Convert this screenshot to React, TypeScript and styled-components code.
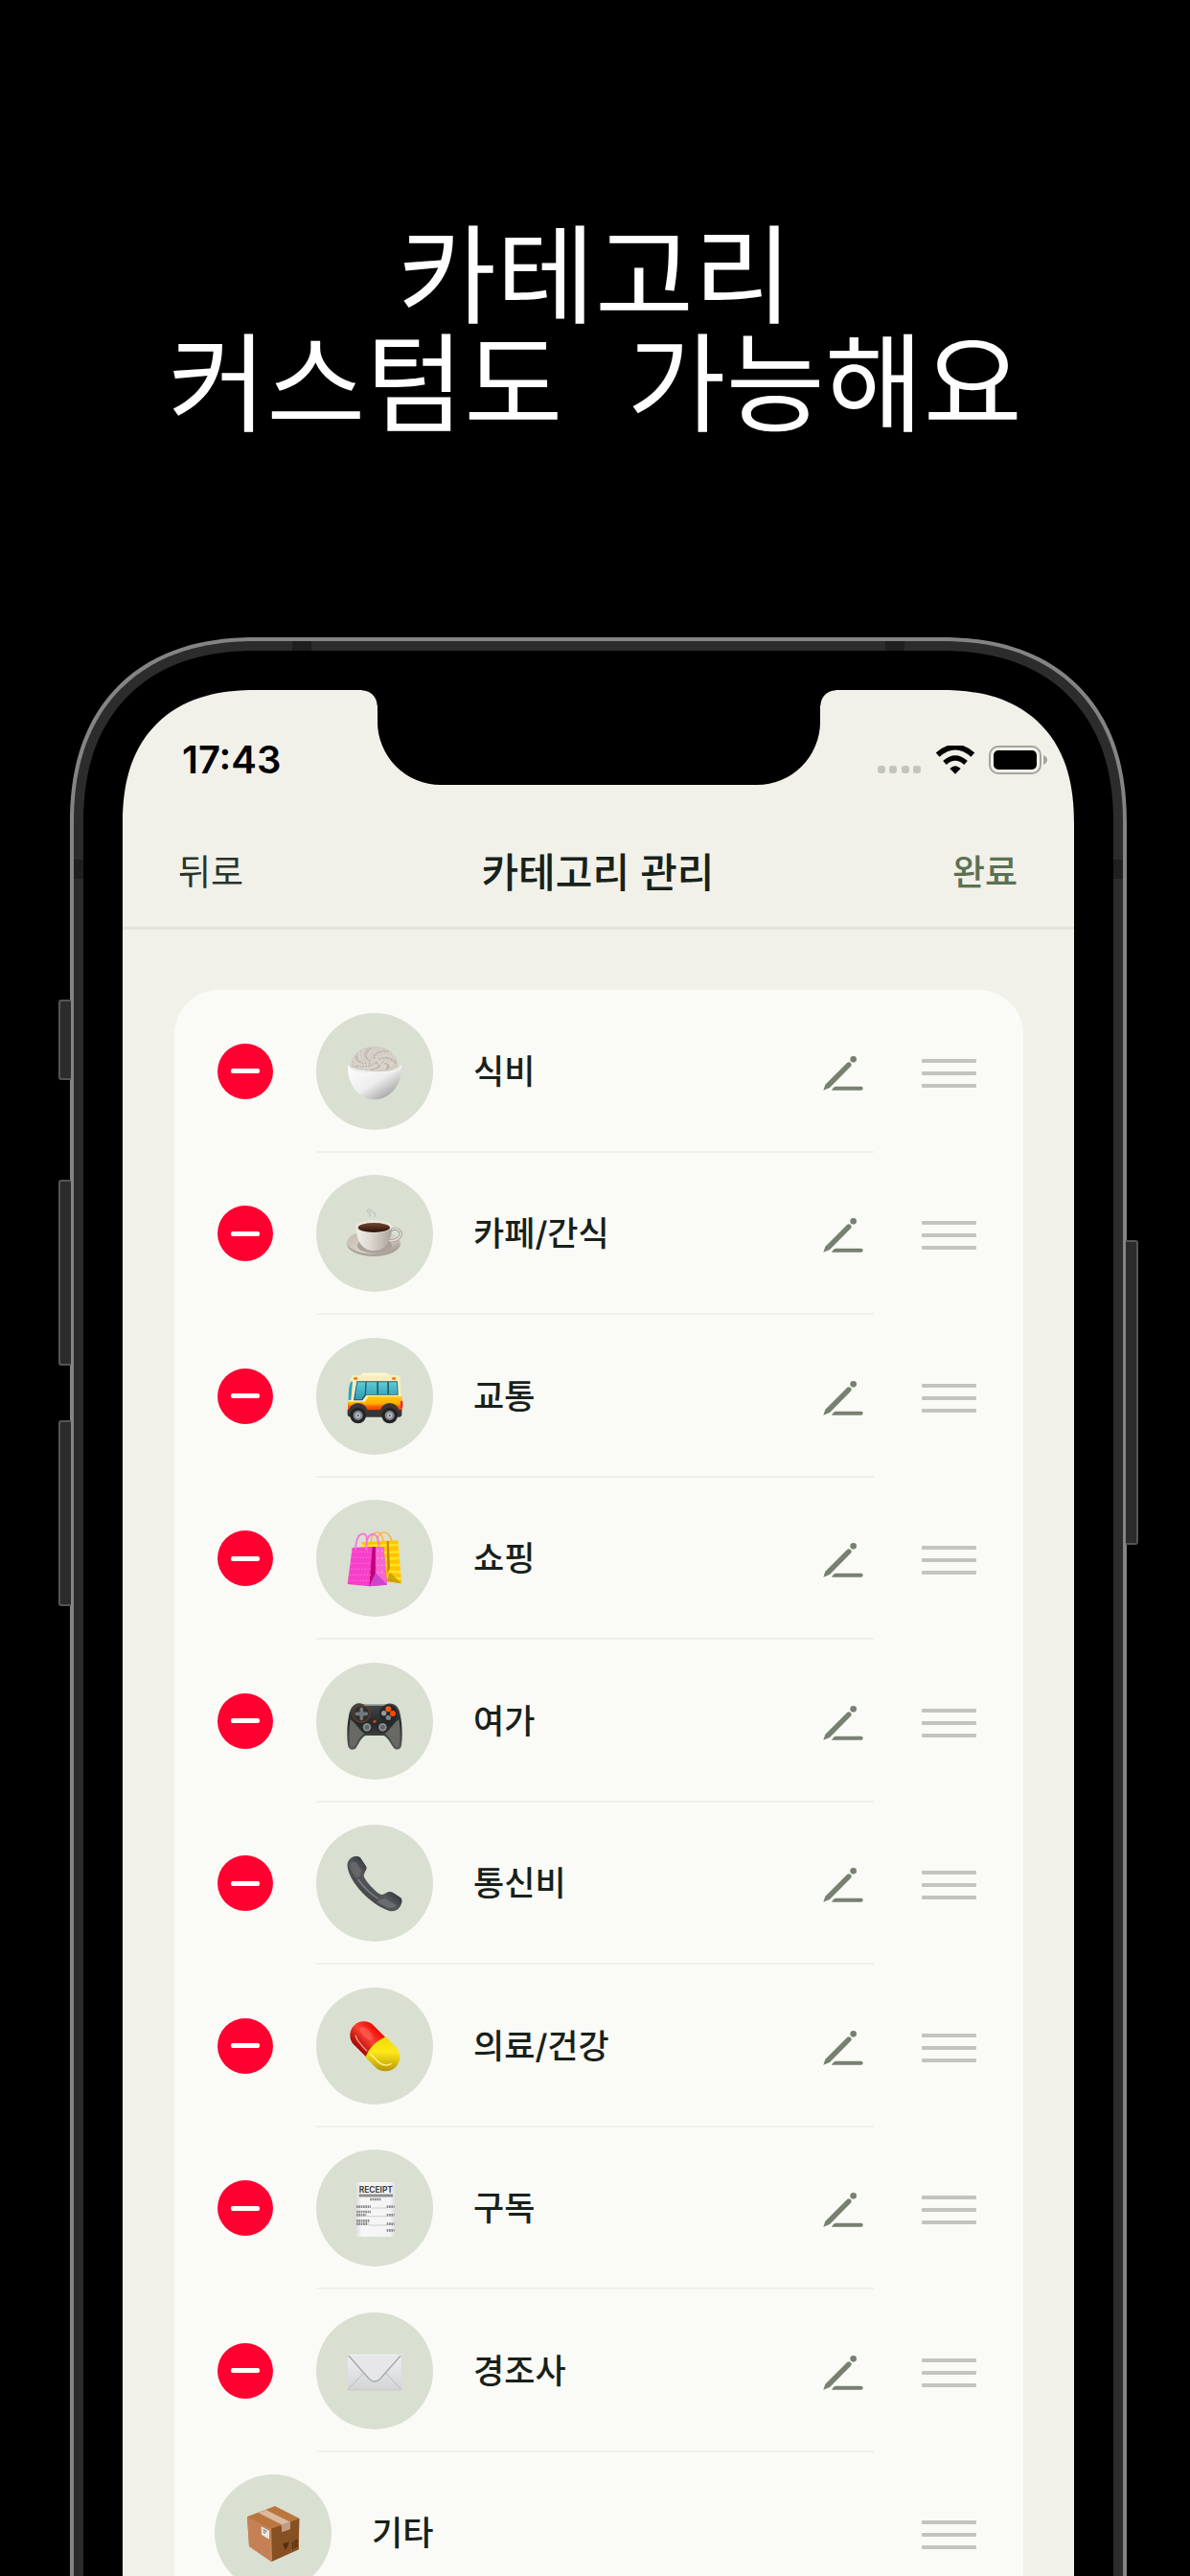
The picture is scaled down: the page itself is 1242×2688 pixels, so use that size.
import React from 'react';
import styled, { createGlobalStyle } from 'styled-components';

const GlobalStyle = createGlobalStyle`
  *, *::before, *::after { box-sizing: border-box; }
  body { margin: 0; background: #000; }
  button { margin: 0; padding: 0; border: 0; background: none; font: inherit; color: inherit; cursor: pointer; }
`;

const Page = styled.main`
  height: 100vh;
  overflow: hidden;
  padding-top: 243px;
  background: #000;
  font-family: Inter, 'Noto Sans CJK KR', sans-serif;
`;

const Headline = styled.h1`
  margin: 0 0 196px;
  color: #fff;
  font-family: 'Liberation Mono', 'Noto Sans CJK KR', monospace;
  font-size: 112px;
  font-weight: 400;
  line-height: 113px;
  text-align: center;
  white-space: nowrap;
`;

const Phone = styled.div`
  position: relative;
  margin: 0 66px 0 73px;
`;

const Frame = styled.div`
  padding: 4px;
  border-radius: 171px 171px 0 0;
  background: #848484;
  @supports (corner-shape: superellipse(1.2)) {
    border-radius: 194px 194px 0 0;
    corner-shape: superellipse(1.2);
  }
`;

const Band = styled.div`
  position: relative;
  overflow: hidden;
  padding: 10px;
  border-radius: 167px 167px 0 0;
  background: #2c2c2c;
  @supports (corner-shape: superellipse(1.2)) {
    border-radius: 190px 190px 0 0;
    corner-shape: superellipse(1.2);
  }
`;

const Antenna = styled.span<{ $side: 'left' | 'right'; $edge?: boolean }>`
  position: absolute;
  ${(p) => p.$side}: ${(p) => (p.$edge ? 0 : 228)}px;
  top: ${(p) => (p.$edge ? 228 : 0)}px;
  width: 20px;
  height: 20px;
  background: #1f1f1f;
`;

const Glass = styled.div`
  position: relative;
  padding: 41px 41px 0;
  border-radius: 157px 157px 0 0;
  background: #000;
  @supports (corner-shape: superellipse(1.2)) {
    border-radius: 180px 180px 0 0;
    corner-shape: superellipse(1.2);
  }
`;

const Key = styled.span<{ $side: 'left' | 'right'; $top: number; $height: number }>`
  position: absolute;
  ${(p) => p.$side}: -12px;
  top: ${(p) => p.$top}px;
  width: 13px;
  height: ${(p) => p.$height}px;
  border: 2px solid #555;
  border-${(p) => (p.$side === 'left' ? 'right' : 'left')}: 0;
  border-radius: ${(p) => (p.$side === 'left' ? '3px 0 0 3px' : '0 3px 3px 0')};
  background: #2c2c2c;
`;

const Screen = styled.div`
  position: relative;
  overflow: hidden;
  border-radius: 118px 118px 0 0;
  background: #f1f1e9;
  color: #18211a;
  @supports (corner-shape: superellipse(1.25)) {
    border-radius: 140px 140px 0 0;
    corner-shape: superellipse(1.25);
  }
`;

const Notch = styled.div`
  position: absolute;
  top: 0;
  left: 50%;
  width: 462px;
  height: 99px;
  margin-left: -231px;
  border-radius: 0 0 66px 66px;
  background: #000;
  &::before,
  &::after {
    content: '';
    position: absolute;
    top: 0;
    width: 16px;
    height: 16px;
  }
  &::before {
    right: 100%;
    background: radial-gradient(circle at 0 100%, transparent 15px, #000 16px);
  }
  &::after {
    left: 100%;
    background: radial-gradient(circle at 100% 100%, transparent 15px, #000 16px);
  }
`;

const StatusBar = styled.div`
  display: flex;
  align-items: center;
  justify-content: space-between;
  height: 134px;
  padding: 12px 27px 0 62px;
  color: #000;
`;

const Clock = styled.time`
  font-size: 40px;
  font-weight: 600;
  line-height: 48px;
`;

const StatusIcons = styled.div`
  display: flex;
  align-items: center;
  gap: 15px;
`;

const NavBar = styled.header`
  display: grid;
  grid-template-columns: 1fr auto 1fr;
  align-items: center;
  height: 116px;
  padding: 0 59px 0 58px;
  border-bottom: 3px solid #e2e3db;
`;

const NavTitle = styled.h2`
  margin: 0;
  font-size: 42px;
  font-weight: 500;
  line-height: 60px;
`;

const NavButton = styled.button<{ $primary?: boolean }>`
  justify-self: ${(p) => (p.$primary ? 'end' : 'start')};
  color: ${(p) => (p.$primary ? '#5a7152' : '#2a332a')};
  font-size: 37px;
  font-weight: ${(p) => (p.$primary ? 500 : 400)};
  line-height: 52px;
`;

const Content = styled.div`
  padding: 63px 53px 0 54px;
`;

const CategoryList = styled.ul`
  display: grid;
  grid-auto-rows: 1fr;
  min-height: 1695px;
  margin: 0;
  padding: 0 49px 0 42px;
  border-radius: 46px 46px 0 0;
  background: #fafbf6;
  list-style: none;
`;

const Row = styled.li`
  display: flex;
  align-items: center;
`;

const RemoveButton = styled.button`
  display: grid;
  place-items: center;
  width: 58px;
  height: 58px;
  margin: 0 45px 0 3px;
  border-radius: 50%;
  background: #ff0030;
  &::before {
    content: '';
    width: 30px;
    height: 5px;
    border-radius: 2px;
    background: #fff;
  }
`;

const RowBody = styled.div<{ $divided: boolean }>`
  display: flex;
  flex: 1;
  align-items: center;
  align-self: stretch;
  padding: 2px 10px 0 0;
  border-bottom: 2px solid ${(p) => (p.$divided ? '#eff0eb' : 'transparent')};
`;

const IconDisc = styled.span`
  display: grid;
  place-items: center;
  width: 122px;
  height: 122px;
  margin-right: 42px;
  border-radius: 50%;
  background: #d9dfd1;
`;

const Label = styled.span`
  flex: 1;
  font-size: 35px;
  font-weight: 500;
  line-height: 52px;
`;

const EditButton = styled.button`
  display: grid;
  width: 44px;
  margin-top: 4px;
`;

const DragButton = styled.button`
  display: grid;
  gap: 9px;
  width: 57px;
  margin: 4px 0 0 50px;
`;

const DragLine = styled.span`
  height: 4px;
  border-radius: 1px;
  background: #c3c4c0;
`;

const Art = ({ children }: { children: React.ReactNode }) => (
  <svg width="60" height="60" viewBox="-90 -90 180 180" aria-hidden="true">
    {children}
  </svg>
);

const grains = Array.from({ length: 150 }, (_, i) => {
  const r = Math.sqrt((i + 0.5) / 150);
  const a = i * 2.4;
  return { x: Math.cos(a) * r * 66, y: -28 + Math.sin(a) * r * (Math.sin(a) < 0 ? 46 : 24), t: (i * 47) % 180 };
});

const Rice = () => (
  <Art>
    <defs>
      <linearGradient id="bowl" x1="0" x2="1" y1="0" y2="1">
        <stop offset="0" stopColor="#fff" />
        <stop offset=".5" stopColor="#eeeeee" />
        <stop offset="1" stopColor="#858587" />
      </linearGradient>
    </defs>
    <path d="M-74 -14C-76 -50-43-78 0-78S74-50 72-14Q0 20-74-14Z" fill="#cfc9c1" />
    {grains.map((g, i) => (
      <ellipse key={i} cx={g.x} cy={g.y} rx="4" ry="2" transform={`rotate(${g.t} ${g.x} ${g.y})`} fill={i % 3 ? '#dfdad3' : '#bbb3a9'} />
    ))}
    <path d="M-84-18C-86 46-45 88 0 88S86 46 84-18Q76 2 0 3T-84-18Z" fill="url(#bowl)" />
    <path d="M-84-20Q-80-3 0 2T84-20" fill="none" stroke="#f5f5f3" strokeWidth="4" />
  </Art>
);

const Coffee = () => (
  <Art>
    <defs>
      <linearGradient id="cup" x1="0" x2="1">
        <stop offset="0" stopColor="#f3f0ea" />
        <stop offset=".4" stopColor="#dcd7d0" />
        <stop offset="1" stopColor="#aaa39b" />
      </linearGradient>
      <linearGradient id="saucer" x1="0" x2="1" y2="1">
        <stop offset="0" stopColor="#c3bab0" />
        <stop offset=".6" stopColor="#d9d1c8" />
        <stop offset="1" stopColor="#8f877f" />
      </linearGradient>
      <linearGradient id="brew" x1="0" x2="0" y1="0" y2="1">
        <stop offset="0" stopColor="#74482f" />
        <stop offset="1" stopColor="#2a120a" />
      </linearGradient>
    </defs>
    <path d="M-18-52C-4-62-30-66-20-74C-10-78-8-68-14-66M-2-52C8-58-6-64-4-70" fill="none" stroke="#b5bdb6" strokeWidth="5" opacity=".6" />
    <ellipse cx="-3" cy="33" rx="83" ry="39" fill="#a9a198" />
    <ellipse cx="-3" cy="28" rx="83" ry="37" fill="url(#saucer)" />
    <ellipse cx="0" cy="38" rx="54" ry="24" fill="#aaa299" />
    <path d="M50-10C70-22 86-6 80 8C74 22 58 24 44 24" fill="none" stroke="#8e8881" strokeWidth="9" />
    <path d="M50-10C70-22 86-6 80 8C74 22 58 24 44 24" fill="none" stroke="#e4dfd8" strokeWidth="5" />
    <path d="M-58-22C-58 18-42 54-2 54S54 18 54-22Z" fill="url(#cup)" />
    <ellipse cx="-2" cy="-21" rx="57" ry="20" fill="#ebe7e1" />
    <ellipse cx="-2" cy="-18" rx="50" ry="15" fill="url(#brew)" />
  </Art>
);

const Bus = () => (
  <Art>
    <defs>
      <linearGradient id="pane" x1="0" x2="0" y1="0" y2="1">
        <stop offset="0" stopColor="#5ccbd6" />
        <stop offset="1" stopColor="#2a9cb5" />
      </linearGradient>
      <linearGradient id="side" x1="0" x2="0" y1="0" y2="1">
        <stop offset="0" stopColor="#ffc80c" />
        <stop offset=".5" stopColor="#ffae00" />
        <stop offset=".7" stopColor="#ff6200" />
        <stop offset="1" stopColor="#f23400" />
      </linearGradient>
    </defs>
    <path d="M-44-66Q-40-73-34-73H34Q42-73 46-66H70Q80-64 80-54L84 20H-78L-80-20Q-78-64-66-65Z" fill="#fbedbd" />
    <path d="M-44-65Q-40-73-34-73H34Q42-73 46-65Z" fill="#fff5d2" />
    <path d="M-82 12C-82-20-80-38-73-47L-69-46L-74 12Z" fill="#2da6bb" />
    <path d="M-84 17H-30L-20 1H86V45H-84Z" fill="url(#side)" />
    <path d="M-56-47H72L74-4H-26L-38 13H-66Z" fill="#2a5965" />
    <path d="M-54-44H-29L-31-6L-41 10H-62ZM-25-44H7V-6H-27ZM12-44H40V-6H12ZM45-44H70L71-6H45Z" fill="url(#pane)" />
    <rect x="-66" y="-59" width="13" height="7" rx="3" fill="#e97d00" />
    <rect x="54" y="-59" width="13" height="7" rx="3" fill="#e97d00" />
    <rect x="81" y="14" width="7" height="23" rx="3" fill="#f5232f" />
    <path d="M-85 43H85V58Q84 65 78 65H-76Q-85 65-85 55Z" fill="#343538" />
    {[-52, 47].map((x) => (
      <g key={x}>
        <path d={`M${x - 31} 52A31 31 0 0 1 ${x + 31} 52Z`} fill="#3e3531" />
        <circle cx={x} cy="60" r="25" fill="#222326" />
        <circle cx={x} cy="60" r="15" fill="#84888c" />
        <circle cx={x} cy="60" r="8" fill="#bbbec0" />
        <circle cx={x} cy="60" r="3" fill="#555" />
      </g>
    ))}
  </Art>
);

const Shopping = () => (
  <Art>
    <path d="M-12-50C-8-92 22-92 28-50M8-50C12-94 44-88 54-54" fill="none" stroke="#ffad30" strokeWidth="4" />
    <path d="M-42-50L73-56L84 79L30 72Z" fill="#ffc400" />
    <path d="M-40-38L74-42M32-18L76-20M34 2L78 0M36 22L80 21M38 42L81 43M38 60L83 64" stroke="#ffe325" strokeWidth="8" />
    <path d="M38-54L44-54L48 30L40 50Z" fill="#c98600" />
    <path d="M48 44L84 79L36 72Z" fill="#b58b00" opacity=".65" />
    <path d="M-70-33L-7-36L28-36L39 83L-17 88L-85 81Z" fill="#f83fca" />
    <path d="M-7-36L3-36L2 52L-17 88Z" fill="#c5007b" />
    <path d="M3-36L28-36L39 83L4 48Z" fill="#f765d2" />
    <path d="M3 46L39 83L-17 88Z" fill="#ca46ce" />
    {[-20, -2, 16, 34, 52, 70].map((y) => (
      <path key={y} d={`M${-72 - y / 8} ${y}H-12`} stroke="#ff89e5" strokeWidth="3" strokeDasharray="3 6" />
    ))}
    {[-22, 0, 22, 44].map((y) => (
      <path key={y} d={`M8 ${y}H30`} stroke="#ffb3ef" strokeWidth="4" strokeDasharray="4 9" />
    ))}
    <path d="M-60-24C-58-64-50-76-36-76S-24-60-26-24M-26-24C-28-64-16-77-3-75S13-56 14-36" fill="none" stroke="#fa72d6" strokeWidth="5" />
  </Art>
);

const Gamepad = () => (
  <Art>
    <defs>
      <linearGradient id="pad" x1="0" x2="0" y1="0" y2="1">
        <stop offset="0" stopColor="#45494b" />
        <stop offset=".45" stopColor="#252728" />
        <stop offset="1" stopColor="#5c5d5a" />
      </linearGradient>
    </defs>
    <path d="M-50-56C-42-58-36-52-28-52H28C36-52 42-58 52-55C68-52 76-42 80-22C86 8 88 44 84 76C82 90 68 92 60 84C50 72 42 50 28 45H-28C-42 50-50 72-58 84C-66 93-82 90-84 74C-88 44-86 8-80-22C-74-44-66-54-50-56Z" fill="url(#pad)" />
    <path d="M-76-6C-82 30-80 58-76 78C-68 86-62 76-56 68C-48 50-36 44-32 38C-46 32-56 8-76-6ZM76-6C82 30 80 58 76 78C68 86 62 76 56 68C48 50 36 44 32 38C46 32 56 8 76-6Z" fill="#686965" />
    <path d="M-34-50H34" stroke="#859190" strokeWidth="4" />
    <circle cx="-41" cy="-23" r="26" fill="#2e3030" stroke="#673c28" strokeWidth="4" />
    <path d="M-41-38V-8M-56-23H-26" stroke="#73787a" strokeWidth="11" strokeLinecap="round" />
    <circle cx="43" cy="-24" r="28" fill="#242627" />
    <circle cx="43" cy="-38" r="9" fill="#ff5a0b" />
    <circle cx="57" cy="-24" r="9" fill="#ff4a00" />
    <circle cx="29" cy="-25" r="8" fill="#96999b" />
    <circle cx="43" cy="-11" r="8" fill="#818486" />
    <circle cx="0" cy="1" r="5" fill="#bb4d18" />
    {[-24, 25].map((x) => (
      <g key={x}>
        <circle cx={x} cy="20" r="16" fill="#222526" />
        <circle cx={x} cy="19" r="13" fill="#858a8b" />
        <circle cx={x} cy="19" r="7" fill="#5f6667" />
      </g>
    ))}
  </Art>
);

const Handset = () => (
  <Art>
    <defs>
      <linearGradient id="phone" x1="0" x2="1" y1="1" y2="0">
        <stop offset="0" stopColor="#2a2c2f" />
        <stop offset=".48" stopColor="#55585b" />
        <stop offset=".6" stopColor="#373d43" />
      </linearGradient>
    </defs>
    <path d="M-85-52C-88-66-76-84-58-84Q-46-85-42-76L-26-52Q-23-44-30-36L-34-24C-34-12 2 26 16 34Q22 38 30 34L42 28Q50 25 58 30L82 46Q88 52 84 64C78 84 62 92 44 86C-14 66-80-4-85-52Z" fill="url(#phone)" />
    <path d="M-76-52C-78-66-62-70-54-62L-42-40L-46-22L-58-16C-70-32-76-42-76-52Z" fill="#6c6e70" opacity=".7" />
    <path d="M14 52L32 48L68 70Q56 84 38 76L8 60Z" fill="#75777a" opacity=".7" />
    <path d="M-52-12C-36 12-6 40 12 48" fill="none" stroke="#7b7e81" strokeWidth="5" />
  </Art>
);

const Pill = () => (
  <Art>
    <defs>
      <linearGradient id="red" x1="0" x2="0" y1="0" y2="1">
        <stop offset="0" stopColor="#ee0d00" />
        <stop offset=".45" stopColor="#ff4036" />
        <stop offset="1" stopColor="#a30800" />
      </linearGradient>
      <linearGradient id="yellow" x1="0" x2="1" y1="0" y2="1">
        <stop offset="0" stopColor="#ecd800" />
        <stop offset=".4" stopColor="#ffe81a" />
        <stop offset="1" stopColor="#a27b00" />
      </linearGradient>
    </defs>
    <g transform="rotate(45)">
      <path d="M5-43H-48A43 43 0 0 0-48 43H5Z" fill="url(#red)" />
      <path d="M4-45H48A45 45 0 0 1 48 45H4Q-14 0 4-45Z" fill="url(#yellow)" />
      <path d="M-66 18Q-56 28-6 28" stroke="#ff928c" strokeWidth="4" fill="none" />
      <path d="M8 27H46Q70 24 76 2" stroke="#fff27c" strokeWidth="5" fill="none" />
      <ellipse cx="-46" cy="-10" rx="26" ry="12" fill="#ff6c62" opacity=".5" />
    </g>
  </Art>
);

const Receipt = () => (
  <Art>
    <defs>
      <linearGradient id="paper" x1="0" x2="1">
        <stop offset="0" stopColor="#dcdcdc" />
        <stop offset=".15" stopColor="#f6f6f6" />
        <stop offset=".85" stopColor="#f4f4f4" />
        <stop offset="1" stopColor="#dadada" />
      </linearGradient>
    </defs>
    <rect x="-59" y="-81" width="125" height="171" fill="url(#paper)" />
    <text x="4" y="-48" textAnchor="middle" fontSize="25" fontWeight="700" fill="#3c3c3c">RECEIPT</text>
    <path d="M-49-39H57" stroke="#8e8e8e" strokeWidth="9" />
    <path d="M-14-27H20" stroke="#888" strokeWidth="7" strokeDasharray="5 2" />
    <path d="M-57-4H-12M-57 12H-12M-57 22H-26M-57 40H-16M-57 50H-20M38-4H62M38 22H62M38 50H62M38 70H62" stroke="#8a8a8a" strokeWidth="8" strokeDasharray="5 2" />
    <path d="M-10 0H38M-24 26H38M-18 54H38" stroke="#bbb" strokeWidth="2" />
  </Art>
);

const Envelope = () => (
  <Art>
    <defs>
      <linearGradient id="mail" x1="0" x2="0" y1="0" y2="1">
        <stop offset="0" stopColor="#f0f0f1" />
        <stop offset="1" stopColor="#d3d4d6" />
      </linearGradient>
    </defs>
    <rect x="-84" y="-52" width="168" height="112" rx="3" fill="url(#mail)" />
    <path d="M-82 57L-34 6M82 57L34 6" stroke="#b8babd" strokeWidth="3" />
    <path d="M-82-48L-18 24Q0 42 18 24L82-48" fill="#e7e7e9" stroke="#a5a8ac" strokeWidth="4" />
    <path d="M-84 59H84" stroke="#c3c5c5" strokeWidth="2" />
  </Art>
);

const Parcel = () => (
  <Art>
    <path d="M6-83L82-45L80 52L-5 90L-75 42L-81-50Z" fill="#bd7847" />
    <path d="M-81-50L-7-13L-5 90L-75 42Z" fill="#c58156" />
    <path d="M-7-13L82-45L80 52L-5 90Z" fill="#865022" />
    <path d="M-81-50L6-83L82-45L-7-13Z" fill="#b9773f" />
    <path d="M-46-63L-22-72L54-34L54-12L28-3L26-26Z" fill="#ddb99e" />
    <path d="M26-26L54-35V-13L28-3Z" fill="#c19a82" />
    <path d="M-37-20L-12-7V20L-36 6Z" fill="#ebe7e1" />
    <path d="M-31-10L-20-4M-31-3L-24 1" stroke="#8d8985" strokeWidth="4" />
    <path d="M30 34L50 28L46 42L38 54Z" fill="#54300f" />
    <path d="M62 28V52M69 22V48M75 20V45" stroke="#57300f" strokeWidth="4" />
    <path d="M-7-13L-5 88" stroke="#d58e5e" strokeWidth="3" />
  </Art>
);

const PencilIcon = () => (
  <svg width="44" height="38" viewBox="0 0 132 114" fill="#778071" aria-hidden="true">
    <path d="M4 110L10 92L79 23Q84 19 90 25Q95 30 90 35L24 102Z" />
    <circle cx="98" cy="13" r="10" />
    <path d="M30 110Q36 98 44 98H122Q128 98 128 104T122 110Z" />
  </svg>
);

const SignalDots = () => (
  <svg width="46" height="30" viewBox="0 0 46 30" fill="#c4c4be" aria-hidden="true">
    {[0, 12, 25, 37].map((x) => (
      <rect key={x} x={x} y="21" width="8" height="8" rx="3" />
    ))}
  </svg>
);

const WifiIcon = () => (
  <svg width="40" height="30" viewBox="0 0 120 90" aria-hidden="true">
    <path d="M5 29Q60-20 115 29" fill="none" stroke="#000" strokeWidth="17" />
    <path d="M27 54Q60 24 93 54" fill="none" stroke="#000" strokeWidth="16" />
    <path d="M43 72Q60 56 77 72L60 89Z" />
  </svg>
);

const BatteryIcon = () => (
  <svg width="62" height="32" viewBox="0 0 62 32" aria-hidden="true">
    <rect x="1" y="2" width="53" height="28" rx="9" fill="none" stroke="#a4a49f" strokeWidth="2" />
    <rect x="5" y="6" width="45" height="20" rx="5" />
    <path d="M57 11Q61 13 61 16T57 21Z" fill="#a4a49f" />
  </svg>
);

type Category = { name: string; art: React.ComponentType; fixed?: boolean };

const categories: Category[] = [
  { name: '식비', art: Rice },
  { name: '카페/간식', art: Coffee },
  { name: '교통', art: Bus },
  { name: '쇼핑', art: Shopping },
  { name: '여가', art: Gamepad },
  { name: '통신비', art: Handset },
  { name: '의료/건강', art: Pill },
  { name: '구독', art: Receipt },
  { name: '경조사', art: Envelope },
  { name: '기타', art: Parcel, fixed: true },
];

const CategoryRow = ({ name, art: Picture, fixed }: Category) => (
  <Row>
    {!fixed && <RemoveButton type="button" aria-label={`${name} 삭제`} />}
    <RowBody $divided={!fixed}>
      <IconDisc>
        <Picture />
      </IconDisc>
      <Label>{name}</Label>
      {!fixed && (
        <EditButton type="button" aria-label={`${name} 편집`}>
          <PencilIcon />
        </EditButton>
      )}
    </RowBody>
    <DragButton type="button" aria-label={`${name} 이동`}>
      <DragLine />
      <DragLine />
      <DragLine />
    </DragButton>
  </Row>
);

export default function App() {
  return (
    <Page lang="ko">
      <GlobalStyle />
      <Headline>
        카테고리
        <br />
        커스텀도 가능해요
      </Headline>
      <Phone>
        <Key $side="left" $top={378} $height={84} />
        <Key $side="left" $top={566} $height={194} />
        <Key $side="left" $top={817} $height={194} />
        <Key $side="right" $top={629} $height={318} />
        <Frame>
          <Band>
            <Antenna $side="left" />
            <Antenna $side="right" />
            <Antenna $side="left" $edge />
            <Antenna $side="right" $edge />
            <Glass>
              <Screen>
                <Notch />
                <StatusBar>
                  <Clock>17:43</Clock>
                  <StatusIcons>
                    <SignalDots />
                    <WifiIcon />
                    <BatteryIcon />
                  </StatusIcons>
                </StatusBar>
                <NavBar>
                  <NavButton type="button">뒤로</NavButton>
                  <NavTitle>카테고리 관리</NavTitle>
                  <NavButton type="button" $primary>
                    완료
                  </NavButton>
                </NavBar>
                <Content>
                  <CategoryList>
                    {categories.map((category) => (
                      <CategoryRow key={category.name} {...category} />
                    ))}
                  </CategoryList>
                </Content>
              </Screen>
            </Glass>
          </Band>
        </Frame>
      </Phone>
    </Page>
  );
}
